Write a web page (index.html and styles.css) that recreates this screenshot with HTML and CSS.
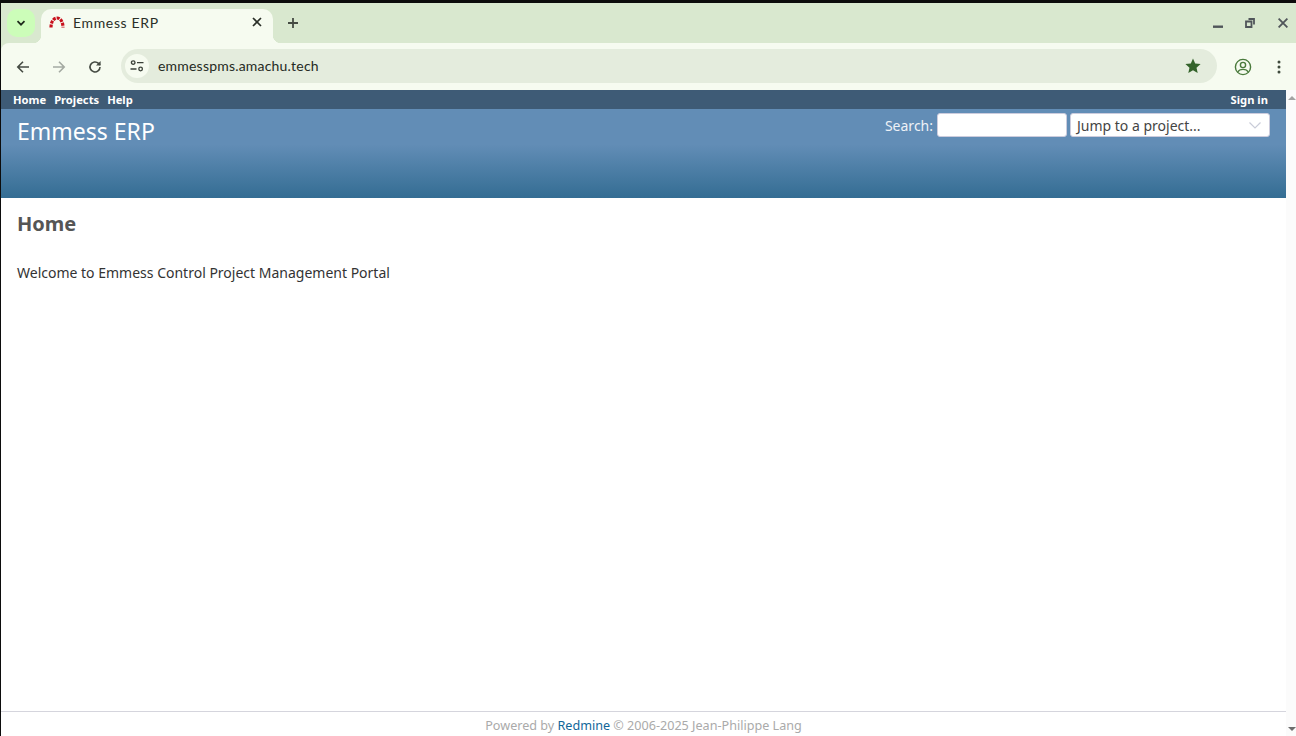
FILE: index.html
```html
<!DOCTYPE html>
<html lang="en">
<head>
<meta charset="utf-8">
<title>Emmess ERP</title>
<link rel="stylesheet" href="styles.css">
</head>
<body>
<div class="window">
  <div class="tabstrip">
    <button class="tabsearch"><svg width="12" height="12" viewBox="0 0 12 12"><path d="M2.500 4.200 6 7.700l3.500-3.500" fill="none" stroke="#1f2a1c" stroke-width="1.700"/></svg></button>
    <div class="tab">
      <svg class="favicon" width="18" height="14" viewBox="0 0 18 14"><path d="M3 12.500C3 7 5.500 3 9 3s6 4 6 9.500" fill="none" stroke="#c8101c" stroke-width="3.200" stroke-dasharray="3 1"/></svg>
      <span class="tabtitle">Emmess ERP</span>
      <svg class="tabclose" width="10" height="10" viewBox="0 0 10 10"><path d="M1 1l8 8M9 1l-8 8" stroke="#2a2f28" stroke-width="1.700"/></svg>
    </div>
    <svg class="newtab" width="10" height="10" viewBox="0 0 10 10"><path d="M5 0v10M0 5h10" stroke="#454b43" stroke-width="1.800"/></svg>
    <div class="winctl">
      <svg class="winmin" width="10" height="10" viewBox="0 0 10 10"><path d="M0 8.700h10" stroke="#50555a" stroke-width="2.400"/></svg>
      <svg width="10" height="10" viewBox="0 0 10 10"><path d="M3.500 1h5.500v5.500" fill="none" stroke="#50555a" stroke-width="1.800"/><path d="M1 3.500h5.500v5.500H1z" fill="none" stroke="#50555a" stroke-width="1.800"/></svg>
      <svg width="10" height="10" viewBox="0 0 10 10"><path d="M.6.600l8.800 8.800M9.400.600.600 9.400" stroke="#50555a" stroke-width="1.800"/></svg>
    </div>
  </div>
  <div class="toolbar">
    <svg class="navicon" width="14" height="14" viewBox="0 0 14 14"><path d="M13 7H2M7 1.800 1.800 7 7 12.200" fill="none" stroke="#454b43" stroke-width="1.600"/></svg>
    <svg class="navicon" width="14" height="14" viewBox="0 0 14 14"><path d="M1 7h11M7 1.800 12.200 7 7 12.200" fill="none" stroke="#a4aaa2" stroke-width="1.600"/></svg>
    <svg class="navicon" width="14" height="14" viewBox="0 0 14 14"><path d="M12 7a5 5 0 1 1-1.500-3.600L12 5" fill="none" stroke="#454b43" stroke-width="1.600"/><path d="M12.600 1v4.600H8" fill="#454b43"/></svg>
    <div class="omnibox">
      <span class="siteinfo"><svg width="14" height="12" viewBox="0 0 14 12"><g fill="none" stroke="#3a4038" stroke-width="1.300"><circle cx="3.200" cy="2.600" r="1.800"/><path d="M7 2.600h6.500M.5 9h6"/><circle cx="10.600" cy="9" r="1.800"/></g></svg></span>
      <span class="url">emmesspms.amachu.tech</span>
      <svg class="star" width="16" height="16" viewBox="0 0 16 16"><path d="m8 .6 2.200 5 5.400.5-4.100 3.600 1.200 5.300L8 12.200 3.300 15l1.200-5.300L.4 6.100l5.400-.5z" fill="#33632a"/></svg>
    </div>
    <svg class="profile" width="18" height="18" viewBox="0 0 18 18"><g fill="none" stroke="#4a7a3c" stroke-width="1.400"><circle cx="9" cy="9" r="7.600"/><circle cx="9" cy="7" r="2.600"/><path d="M3.800 14c1-2 3-2.600 5.200-2.600s4.200.6 5.200 2.600"/></g></svg>
    <svg class="kebab" width="4" height="14" viewBox="0 0 4 14"><g fill="#3f4a3c"><circle cx="2" cy="2" r="1.500"/><circle cx="2" cy="7" r="1.500"/><circle cx="2" cy="12" r="1.500"/></g></svg>
  </div>
  <div class="viewport">
    <div class="page">
      <div class="topmenu">
        <a href="#">Home</a><a href="#">Projects</a><a href="#">Help</a>
        <a class="signin" href="#">Sign in</a>
      </div>
      <header class="header">
        <h1>Emmess ERP</h1>
        <div class="quick">
          <label>Search:</label>
          <input class="search" type="text">
          <div class="jump"><span>Jump to a project...</span><svg width="12" height="7" viewBox="0 0 12 7"><path d="M.5.5 6 6l5.500-5.500" fill="none" stroke="#c9ccd8" stroke-width="1.200"/></svg></div>
        </div>
      </header>
      <main class="content">
        <h2>Home</h2>
        <p>Welcome to Emmess Control Project Management Portal</p>
      </main>
      <footer class="footer">Powered by <a href="#">Redmine</a> © 2006-2025 Jean-Philippe Lang</footer>
    </div>
    <div class="scrollbar">
      <span class="arrow up"></span>
      <span class="arrow down"></span>
    </div>
  </div>
</div>
</body>
</html>
```
FILE: styles.css
```css
html, body { margin: 0; height: 100%; overflow: hidden; background: #fff; }
body { font-family: "Noto Sans", "Open Sans", sans-serif; }
.window { height: 736px; box-sizing: border-box; border-top: 3px solid #0c0c0c; border-left: 1px solid #0c0c0c; display: flex; flex-direction: column; background: #d9e8cf; }
.tabstrip { height: 40px; background: #d9e8cf; display: flex; align-items: flex-start; flex: none; }
.tabsearch { width: 28px; height: 28px; margin: 6px 0 0 6px; border: 0; padding: 0; border-radius: 10px; background: #ccfdb9; display: flex; align-items: center; justify-content: center; }
.tab { position: relative; width: 232px; height: 34px; margin: 6px 0 0 6px; background: #f6fbf0; border-radius: 10px 10px 0 0; display: flex; align-items: center; box-sizing: border-box; padding: 0 11px 8px 7px; }
.tab::before, .tab::after { content: ""; position: absolute; bottom: 0; width: 8px; height: 8px; }
.tab::before { left: -8px; background: radial-gradient(circle at 0 0, transparent 8px, #f6fbf0 8.500px); }
.tab::after { right: -8px; background: radial-gradient(circle at 100% 0, transparent 8px, #f6fbf0 8.500px); }
.favicon { flex: none; }
.tabtitle { margin-left: 7px; font: 14px "Lato", "Noto Sans", sans-serif; color: #2a2f28; letter-spacing: .65px; flex: 1; }
.newtab { margin: 15px 0 0 15px; }
.winctl { margin-left: auto; display: flex; gap: 23px; padding: 15px 8px 0 0; align-items: center; }
.winmin { margin-right: -1px; }
.toolbar { height: 47px; background: #f6fbf0; display: flex; align-items: center; flex: none; border-top-left-radius: 8px; }
.navicon { margin-left: 15px; margin-right: 7px; flex: none; }
.navicon + .navicon { margin-left: 15px; }
.omnibox { width: 1096px; height: 34px; margin-left: 12px; margin-top: -1px; border-radius: 17px; background: #e4ecdd; display: flex; align-items: center; box-sizing: border-box; padding: 0 16px 0 4px; }
.siteinfo { width: 24px; height: 24px; border-radius: 50%; background: #f6fbf0; display: flex; align-items: center; justify-content: center; }
.url { margin-left: 9px; margin-top: -2px; font: 14px "Lato", "Noto Sans", sans-serif; color: #252a23; flex: 1; letter-spacing: .2px; }
.profile { margin-left: 17px; flex: none; }
.kebab { margin-left: 25px; flex: none; }
.viewport { flex: 1; display: flex; min-height: 0; background: #fff; }
.page { flex: 1; min-width: 0; display: flex; flex-direction: column; }
.scrollbar { width: 10px; box-sizing: border-box; background: #fbfbfb; display: flex; flex-direction: column; justify-content: space-between; padding: 6px 0 5px 2px; }
.arrow { width: 0; height: 0; border-left: 4px solid transparent; border-right: 4px solid transparent; }
.arrow.up { border-bottom: 4px solid #a3a3a3; }
.arrow.down { border-top: 4px solid #6d6d6d; }
.topmenu { height: 19px; background: #3e5b76; display: flex; align-items: center; padding: 0 18px 0 12px; font-size: 11.200px; font-weight: 700; flex: none; gap: 8px; }
.topmenu a { color: #fff; text-decoration: none; }
.topmenu .signin { margin-left: auto; }
.header { height: 89px; flex: none; box-sizing: border-box; background: linear-gradient(#628db6 0, #628db6 40%, #346d93 100%); color: #fff; display: flex; justify-content: space-between; padding: 4px 16px 0; }
.header h1 { margin: 4px 0 0; font-size: 23px; font-weight: 400; line-height: 28px; }
.quick { display: flex; align-items: flex-start; font-size: 14px; color: #eef2f7; }
.quick label { margin: 3px 4px 0 0; line-height: 20px; }
.search { width: 130px; height: 24px; box-sizing: border-box; border: 1px solid #ccd; border-radius: 3px; background: #fff; padding: 0; margin: 0 3px 0 0; }
.jump { width: 200px; height: 24px; box-sizing: border-box; border: 1px solid #ccd; border-radius: 3px; background: #fff; color: #444; display: flex; align-items: center; justify-content: space-between; padding: 0 8px 0 6px; }
.content { flex: 1; padding: 0 16px; color: #333; }
.content h2 { margin: 12px 0 0; font-size: 20px; line-height: 28px; color: #555; font-weight: 700; }
.content p { margin: 25px 0 0; font-size: 14px; line-height: 20px; }
.footer { height: 25px; flex: none; box-sizing: border-box; border-top: 1px solid #d5d5dd; text-align: center; font-size: 12.600px; line-height: 27px; color: #aaa; }
.footer a { color: #169; text-decoration: none; }
```
